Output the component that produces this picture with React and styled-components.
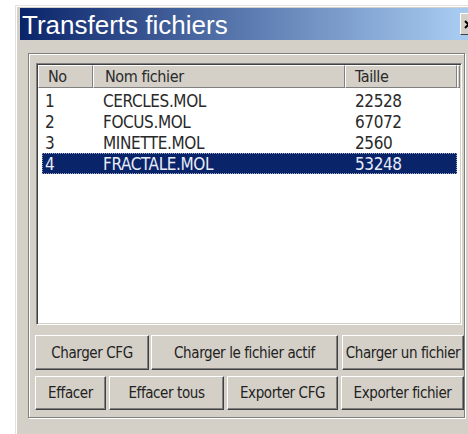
import React from 'react';
import styled, { createGlobalStyle } from 'styled-components';

const GlobalStyle = createGlobalStyle`
    html, body {
        margin: 0;
        background: #ffffff;
        overflow: hidden;
    }
    body {
        width: 468px;
        height: 434px;
    }
    * {
        box-sizing: border-box;
    }
`

const NARROW = `"DejaVu Sans Condensed", "Liberation Sans", sans-serif`

//Dialog frame
const Page = styled.div`
    padding: 5px 0 0 15px;
`
const Window = styled.div`
    width: 480px;
    height: 440px;
    background-color: #d4d0c8;
    border-top: 1px solid #e4e2dc;
    border-left: 1px solid #e4e2dc;
    box-shadow: inset 1px 1px 0 #ffffff;
    padding: 2px 0 0 4px;
    display: flex;
    flex-direction: column;
`
const TitleBar = styled.div`
    width: 460px;
    height: 32px;
    display: flex;
    align-items: center;
    background: linear-gradient(to right, #0a246a 0px, #a6caf0 438px);
    padding-left: 2px;
`
const Title = styled.span`
    font-family: "Liberation Sans", Arial, sans-serif;
    font-size: 26px;
    color: #ffffff;
    line-height: 1;
    margin-top: 1px;
`
const CloseButton = styled.div`
    margin-left: auto;
    margin-right: 2px;
    width: 18px;
    height: 22px;
    background-color: #d4d0c8;
    border-top: 1px solid #ffffff;
    border-left: 1px solid #ffffff;
    border-bottom: 1px solid #404040;
    border-right: 1px solid #404040;
    display: flex;
    align-items: center;
    padding-left: 3px;
`

//Group box with the file list and the buttons
const GroupBox = styled.div`
    margin: 13px 0 0 8px;
    width: 437px;
    height: 365px;
    border: 1px solid #808080;
    box-shadow: inset 1px 1px 0 #ffffff, 1px 1px 0 #ffffff;
    padding: 9px 0 0 6px;
    display: flex;
    flex-direction: column;
`
const ListView = styled.div`
    margin-left: 1px;
    width: 426px;
    height: 262px;
    background-color: #ffffff;
    border-top: 1px solid #808080;
    border-left: 1px solid #808080;
    border-bottom: 1px solid #ffffff;
    border-right: 1px solid #ffffff;
    box-shadow: inset 1px 1px 0 #404040, inset -1px -1px 0 #d4d0c8;
    padding: 1px;
    display: flex;
    flex-direction: column;
`
const HeaderRow = styled.div`
    display: flex;
    height: 23px;
    background-color: #d4d0c8;
`
const HeaderCell = styled.div`
    width: ${p => p.$w}px;
    flex: ${p => (p.$fill ? 1 : 'none')};
    height: 100%;
    padding-left: ${p => p.$pad}px;
    font-family: ${NARROW};
    font-size: 16px;
    letter-spacing: -0.4px;
    line-height: 21px;
    color: #2a2a2a;
    border-top: 1px solid #ffffff;
    border-left: 1px solid #ffffff;
    border-bottom: 1px solid #808080;
    border-right: 1px solid #808080;
    white-space: nowrap;
    overflow: hidden;
`
const Rows = styled.div`
    padding: 2px 3px 0 4px;
    display: flex;
    flex-direction: column;
`
const Row = styled.div`
    display: grid;
    grid-template-columns: 58px 252px 1fr;
    height: 21px;
    align-items: center;
    font-family: ${NARROW};
    font-size: 17px;
    letter-spacing: -0.4px;
    color: ${p => (p.$selected ? '#e8ecf8' : '#2a2a2a')};
    background-color: ${p => (p.$selected ? '#0a246a' : 'transparent')};
    outline: ${p => (p.$selected ? '1px dotted #9aa6c4' : 'none')};
    outline-offset: -1px;
`
const Cell = styled.span`
    padding-left: 3px;
    white-space: nowrap;
`

const ButtonArea = styled.div`
    margin-top: 10px;
    display: flex;
    flex-direction: column;
    row-gap: 6px;
`
const ButtonRow = styled.div`
    display: flex;
    height: ${p => p.$h}px;
`
const Button = styled.button`
    width: ${p => p.$w}px;
    margin-left: ${p => p.$gap || 0}px;
    height: 100%;
    padding: 0;
    font-family: ${NARROW};
    font-size: 15px;
    letter-spacing: -0.4px;
    color: #222222;
    background-color: #d4d0c8;
    border-top: 1px solid #ffffff;
    border-left: 1px solid #ffffff;
    border-bottom: 1px solid #404040;
    border-right: 1px solid #404040;
    box-shadow: inset -1px -1px 0 #808080;
    white-space: nowrap;
    overflow: hidden;
    cursor: pointer;
`

const files = [
    { no: 1, name: 'CERCLES.MOL', size: 22528 },
    { no: 2, name: 'FOCUS.MOL', size: 67072 },
    { no: 3, name: 'MINETTE.MOL', size: 2560 },
    { no: 4, name: 'FRACTALE.MOL', size: 53248 },
]

const topButtons = [
    { label: 'Charger CFG', w: 114 },
    { label: 'Charger le fichier actif', w: 187, gap: 2 },
    { label: 'Charger un fichier', w: 122, gap: 4 },
]
const bottomButtons = [
    { label: 'Effacer', w: 71 },
    { label: 'Effacer tous', w: 115, gap: 3 },
    { label: 'Exporter CFG', w: 111, gap: 3 },
    { label: 'Exporter fichier', w: 123, gap: 3 },
]

export default function App() {
    const selected = 4

    return (
        <Page>
            <GlobalStyle />
            <Window>
                <TitleBar>
                    <Title>{'Transferts fichiers'}</Title>
                    <CloseButton>
                        <svg width="10" height="9" viewBox="0 0 10 9">
                            <path d="M1 1 L8 8 M8 1 L1 8" stroke="#000" strokeWidth="2" />
                        </svg>
                    </CloseButton>
                </TitleBar>
                <GroupBox>
                    <ListView>
                        <HeaderRow>
                            <HeaderCell $w={55} $pad={9}>{'No'}</HeaderCell>
                            <HeaderCell $w={252} $pad={11}>{'Nom fichier'}</HeaderCell>
                            <HeaderCell $w={112} $pad={9}>{'Taille'}</HeaderCell>
                            <HeaderCell $fill $pad={0} />
                        </HeaderRow>
                        <Rows>
                            {files.map(f => (
                                <Row key={f.no} $selected={f.no === selected}>
                                    <Cell>{f.no}</Cell>
                                    <Cell>{f.name}</Cell>
                                    <Cell>{f.size}</Cell>
                                </Row>
                            ))}
                        </Rows>
                    </ListView>
                    <ButtonArea>
                        <ButtonRow $h={35}>
                            {topButtons.map(b => (
                                <Button key={b.label} type="button" $w={b.w} $gap={b.gap}>
                                    {b.label}
                                </Button>
                            ))}
                        </ButtonRow>
                        <ButtonRow $h={34}>
                            {bottomButtons.map(b => (
                                <Button key={b.label} type="button" $w={b.w} $gap={b.gap}>
                                    {b.label}
                                </Button>
                            ))}
                        </ButtonRow>
                    </ButtonArea>
                </GroupBox>
            </Window>
        </Page>
    )
}
